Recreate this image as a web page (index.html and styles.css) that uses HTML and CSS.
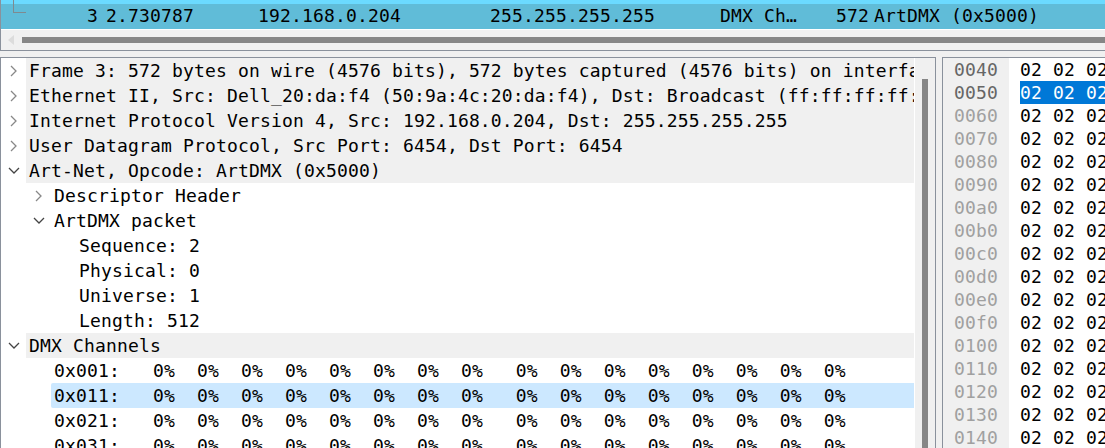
FILE: index.html
```html
<!DOCTYPE html>
<html lang="en">
<head>
    <meta charset="UTF-8">
    <title>Art-Net capture</title>
    <link rel="stylesheet" href="styles.css">
</head>
<body>
    <div class="packet-list">
        <div class="packet-row">
            <span class="link-mark"></span>
            <span class="col-no">3</span>
            <span class="col-time">2.730787</span>
            <span class="col-src">192.168.0.204</span>
            <span class="col-dst">255.255.255.255</span>
            <span class="col-proto">DMX Ch…</span>
            <span class="col-len">572</span>
            <span class="col-info">ArtDMX (0x5000)</span>
        </div>
        <div class="hscroll">
            <svg class="scroll-arrow" width="8" height="10" viewBox="0 0 8 10"><path d="M7 0v10L1 5z" fill="#dcdcdc"/></svg>
            <div class="hscroll-thumb"></div>
        </div>
    </div>
    <div class="panes">
        <div class="tree-pane">
            <div class="tree">
                <div class="row top"><svg class="arrow closed" viewBox="0 0 12 12"><path d="M3 1l5 5-5 5"/></svg><span class="label">Frame 3: 572 bytes on wire (4576 bits), 572 bytes captured (4576 bits) on interfa</span></div>
                <div class="row top"><svg class="arrow closed" viewBox="0 0 12 12"><path d="M3 1l5 5-5 5"/></svg><span class="label">Ethernet II, Src: Dell_20:da:f4 (50:9a:4c:20:da:f4), Dst: Broadcast (ff:ff:ff:ff:</span></div>
                <div class="row top"><svg class="arrow closed" viewBox="0 0 12 12"><path d="M3 1l5 5-5 5"/></svg><span class="label">Internet Protocol Version 4, Src: 192.168.0.204, Dst: 255.255.255.255</span></div>
                <div class="row top"><svg class="arrow closed" viewBox="0 0 12 12"><path d="M3 1l5 5-5 5"/></svg><span class="label">User Datagram Protocol, Src Port: 6454, Dst Port: 6454</span></div>
                <div class="row top"><svg class="arrow" viewBox="0 0 12 12"><path d="M1 3l5 5 5-5"/></svg><span class="label">Art-Net, Opcode: ArtDMX (0x5000)</span></div>
                <div class="row lvl1"><svg class="arrow closed" viewBox="0 0 12 12"><path d="M3 1l5 5-5 5"/></svg><span class="label">Descriptor Header</span></div>
                <div class="row lvl1"><svg class="arrow" viewBox="0 0 12 12"><path d="M1 3l5 5 5-5"/></svg><span class="label">ArtDMX packet</span></div>
                <div class="row lvl2"><span class="label">Sequence: 2</span></div>
                <div class="row lvl2"><span class="label">Physical: 0</span></div>
                <div class="row lvl2"><span class="label">Universe: 1</span></div>
                <div class="row lvl2"><span class="label">Length: 512</span></div>
                <div class="row top"><svg class="arrow" viewBox="0 0 12 12"><path d="M1 3l5 5 5-5"/></svg><span class="label">DMX Channels</span></div>
                <div class="row chan"><span class="label">0x001:   0%  0%  0%  0%  0%  0%  0%  0%   0%  0%  0%  0%  0%  0%  0%  0%</span></div>
                <div class="row chan selected"><span class="label">0x011:   0%  0%  0%  0%  0%  0%  0%  0%   0%  0%  0%  0%  0%  0%  0%  0%</span></div>
                <div class="row chan"><span class="label">0x021:   0%  0%  0%  0%  0%  0%  0%  0%   0%  0%  0%  0%  0%  0%  0%  0%</span></div>
                <div class="row chan"><span class="label">0x031:   0%  0%  0%  0%  0%  0%  0%  0%   0%  0%  0%  0%  0%  0%  0%  0%</span></div>
            </div>
            <div class="vscroll"><div class="vscroll-thumb"></div></div>
        </div>
        <div class="hex-pane">
            <div class="offsets">
                <div class="off dark">0040</div>
                <div class="off dark">0050</div>
                <div class="off">0060</div>
                <div class="off">0070</div>
                <div class="off">0080</div>
                <div class="off">0090</div>
                <div class="off">00a0</div>
                <div class="off">00b0</div>
                <div class="off">00c0</div>
                <div class="off">00d0</div>
                <div class="off">00e0</div>
                <div class="off">00f0</div>
                <div class="off">0100</div>
                <div class="off">0110</div>
                <div class="off">0120</div>
                <div class="off">0130</div>
                <div class="off">0140</div>
            </div>
            <div class="bytes">
                <div class="hex">02 02 02</div>
                <div class="hex"><span class="hex-sel">02 02 02</span></div>
                <div class="hex">02 02 02</div>
                <div class="hex">02 02 02</div>
                <div class="hex">02 02 02</div>
                <div class="hex">02 02 02</div>
                <div class="hex">02 02 02</div>
                <div class="hex">02 02 02</div>
                <div class="hex">02 02 02</div>
                <div class="hex">02 02 02</div>
                <div class="hex">02 02 02</div>
                <div class="hex">02 02 02</div>
                <div class="hex">02 02 02</div>
                <div class="hex">02 02 02</div>
                <div class="hex">02 02 02</div>
                <div class="hex">02 02 02</div>
                <div class="hex">02 02 02</div>
            </div>
        </div>
    </div>
</body>
</html>
```
FILE: styles.css
```css
html, body {
    margin: 0;
    height: 448px;
    overflow: hidden;
}
body {
    background-color: #f0f0f0;
    color: #000;
    font-family: "DejaVu Sans Mono", monospace;
    font-size: 18px;
    letter-spacing: 0.16px;
}
.packet-list {
    height: 51px;
    border-left: 1px solid #8a919c;
    border-bottom: 1px solid #8a919c;
    box-sizing: border-box;
    background: #f0f0f0;
}
.packet-row {
    display: flex;
    align-items: center;
    height: 30px;
    box-sizing: border-box;
    border-top: 4px solid #6bdaff;
    border-bottom: 1px solid #fff;
    background-color: #60bcd8;
    white-space: pre;
    position: relative;
}
.link-mark {
    position: absolute;
    left: 12px;
    top: -4px;
    width: 12px;
    height: 12px;
    border-left: 1px solid #7f8a90;
    border-bottom: 1px solid #7f8a90;
}
.packet-row span {
    display: block;
    margin-bottom: 2px;
}
.col-no { width: 97px; text-align: right; }
.col-time { margin-left: 8px; width: 152px; }
.col-src { width: 232px; }
.col-dst { width: 230px; }
.col-proto { width: 102px; }
.col-len { width: 47px; text-align: right; }
.col-info { margin-left: 5px; }
.hscroll {
    display: flex;
    align-items: center;
    height: 20px;
    padding-left: 6px;
}
.hscroll-thumb {
    flex: 1;
    height: 6px;
    margin-left: 7px;
    background: #868686;
}
.panes {
    display: flex;
    height: 391px;
    margin-top: 6px;
}
.tree-pane {
    width: 936px;
    box-sizing: border-box;
    border: 1px solid #8a919c;
    border-bottom: 0;
    background: #fff;
    display: flex;
    overflow: hidden;
}
.tree {
    flex: 1;
    min-width: 0;
    margin-right: 1px;
}
.row {
    display: flex;
    align-items: center;
    height: 25px;
    white-space: pre;
    overflow: hidden;
}
.row.top .label { background: #f0f0f0; }
.label {
    display: block;
    flex: 1;
    height: 25px;
    line-height: 26px;
    min-width: 0;
    overflow: hidden;
}
.arrow {
    width: 12px;
    height: 12px;
    fill: none;
    stroke: #444;
    stroke-width: 1.3;
    flex: none;
}
.arrow.closed { stroke: #888; }
.row.top { padding-left: 7px; }
.row.top .arrow { margin-right: 6px; }
.row.top .label { padding-left: 3px; }
.row.lvl1 { padding-left: 32px; }
.row.lvl1 .arrow { margin-right: 9px; }
.row.lvl2 { padding-left: 78px; }
.row.chan { padding-left: 50px; }
.row.chan .label { padding-left: 3px; }
.row.selected .label {
    background: #cce8ff;
    border-radius: 2px 0 0 2px;
}
.vscroll {
    width: 20px;
    background: #f0f0f0;
    flex: none;
}
.vscroll-thumb {
    width: 6px;
    margin: 21px 0 0 7px;
    height: 377px;
    background: #868686;
}
.hex-pane {
    display: flex;
    flex: 1;
    margin-left: 6px;
    border-left: 1px solid #8a919c;
    border-top: 1px solid #8a919c;
    background: #fff;
    overflow: hidden;
}
.offsets {
    width: 66px;
    flex: none;
    background: #f0f0f0;
    color: #a0a0a0;
    padding-left: 11px;
    box-sizing: border-box;
}
.off, .hex {
    height: 23px;
    line-height: 24px;
    white-space: pre;
}
.off.dark { color: #666; }
.bytes {
    padding-left: 11px;
    flex: 1;
}
.hex-sel {
    display: inline-block;
    height: 23px;
    background: #0078d7;
    color: #fff;
}
```
